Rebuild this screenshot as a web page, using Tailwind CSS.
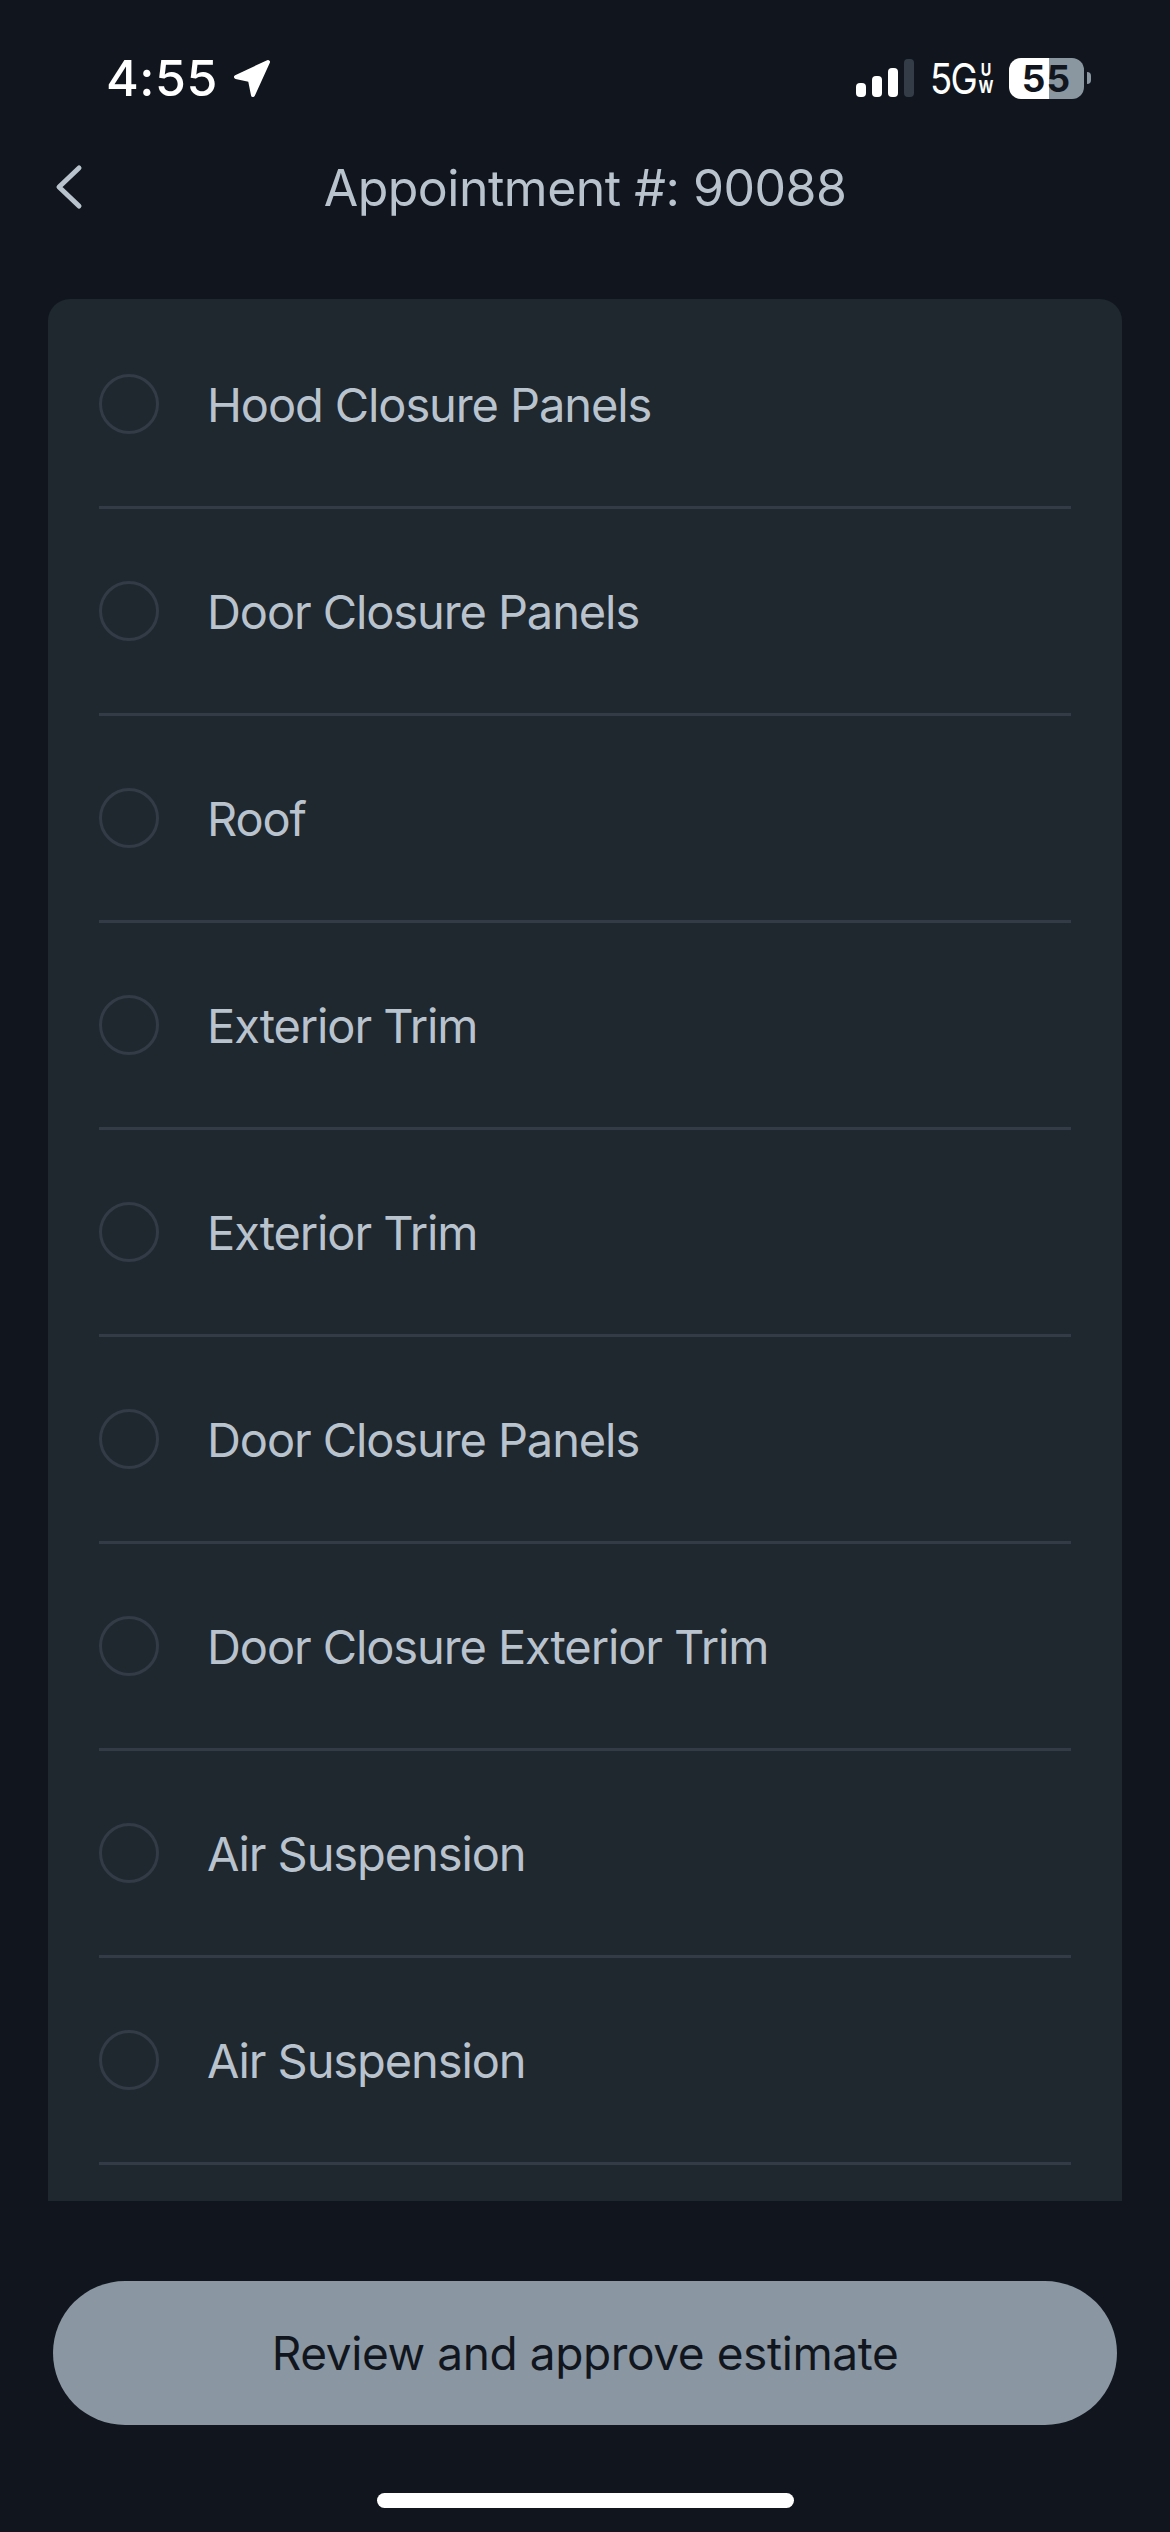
<!doctype html>
<html>
  <head>
    <meta charset="UTF-8">
    <meta name="viewport" content="width=device-width, initial-scale=1.0">
    <script src="https://cdn.jsdelivr.net/npm/@tailwindcss/browser@4"></script>
  </head>
  <body class="bg-[#11161e]">
    <div class="w-[1170px] h-[2532px] flex flex-col bg-[#11161e] font-['Inter',sans-serif] overflow-hidden">

      <!-- status bar -->
      <div class="h-[150px] shrink-0 flex items-start justify-between pt-[55px] pl-[106px] pr-[79px]">
        <div class="flex items-center gap-[14px] h-[46px]">
          <span class="text-[50px] leading-[46px] font-medium text-white tracking-[0.5px]">4:55</span>
          <svg class="w-[40px] h-[40px]" viewBox="0 0 40 40"><path d="M36 4 4 19l14 3 3 15Z" fill="#fff" stroke="#fff" stroke-width="4" stroke-linejoin="round"/></svg>
        </div>
        <div class="flex items-center h-[46px]">
          <svg class="w-[58px] h-[38px]" viewBox="0 0 58 38">
            <rect x="0" y="24" width="10" height="14" rx="4" fill="#fff"/>
            <rect x="16" y="17" width="10" height="21" rx="4" fill="#fff"/>
            <rect x="32" y="9" width="10" height="29" rx="4" fill="#fff"/>
            <rect x="48" y="0" width="10" height="38" rx="4" fill="#343d47"/>
          </svg>
          <span class="ml-[16px] w-[47px] inline-block whitespace-nowrap origin-left scale-x-[0.85] text-[43px] leading-[46px] font-normal text-white tracking-[-2px]">5G</span>
          <div class="ml-[2px] w-[14px] flex flex-col items-center text-[18px] leading-[17px] font-bold text-white scale-x-[0.8]">
            <span>U</span>
            <span>W</span>
          </div>
          <div class="ml-[16px] w-[75px] h-[41px] rounded-[12px] bg-[linear-gradient(90deg,#fff_54%,#8a96a0_54%)] flex items-center justify-center">
            <span class="text-[37px] leading-[41px] font-bold text-[#11161e] tracking-[1px]">55</span>
          </div>
          <div class="ml-[3px] w-[4px] h-[12px] rounded-r-full bg-[#8a96a0]"></div>
        </div>
      </div>

      <!-- header -->
      <div class="relative h-[149px] shrink-0 flex items-start justify-center">
        <svg class="absolute left-[54px] top-[14px] w-[30px] h-[48px]" viewBox="0 0 30 48" fill="none"><path d="M25 4 5 23l20 19" stroke="#b9c3ce" stroke-width="5" stroke-linecap="round" stroke-linejoin="round"/></svg>
        <h1 class="text-[50px] leading-[76px] font-normal text-[#b9c3ce] tracking-[-0.5px]">Appointment #: 90088</h1>
      </div>

      <!-- list -->
      <div class="mx-[48px] h-[1902px] shrink-0 rounded-t-[22px] bg-[#1f272f] px-[51px] pt-[3px] overflow-hidden">
        <div class="h-[207px] flex items-center gap-[48px] border-b-[3px] border-[#333b46]">
          <div class="w-[60px] h-[60px] rounded-full border-[3px] border-[#333b46]"></div>
          <span class="mt-[3px] text-[47px] tracking-[-1.1px] text-[#b9c3ce]">Hood Closure Panels</span>
        </div>
        <div class="h-[207px] flex items-center gap-[48px] border-b-[3px] border-[#333b46]">
          <div class="w-[60px] h-[60px] rounded-full border-[3px] border-[#333b46]"></div>
          <span class="mt-[3px] text-[47px] tracking-[-1.1px] text-[#b9c3ce]">Door Closure Panels</span>
        </div>
        <div class="h-[207px] flex items-center gap-[48px] border-b-[3px] border-[#333b46]">
          <div class="w-[60px] h-[60px] rounded-full border-[3px] border-[#333b46]"></div>
          <span class="mt-[3px] text-[47px] tracking-[-1.1px] text-[#b9c3ce]">Roof</span>
        </div>
        <div class="h-[207px] flex items-center gap-[48px] border-b-[3px] border-[#333b46]">
          <div class="w-[60px] h-[60px] rounded-full border-[3px] border-[#333b46]"></div>
          <span class="mt-[3px] text-[47px] tracking-[-1.1px] text-[#b9c3ce]">Exterior Trim</span>
        </div>
        <div class="h-[207px] flex items-center gap-[48px] border-b-[3px] border-[#333b46]">
          <div class="w-[60px] h-[60px] rounded-full border-[3px] border-[#333b46]"></div>
          <span class="mt-[3px] text-[47px] tracking-[-1.1px] text-[#b9c3ce]">Exterior Trim</span>
        </div>
        <div class="h-[207px] flex items-center gap-[48px] border-b-[3px] border-[#333b46]">
          <div class="w-[60px] h-[60px] rounded-full border-[3px] border-[#333b46]"></div>
          <span class="mt-[3px] text-[47px] tracking-[-1.1px] text-[#b9c3ce]">Door Closure Panels</span>
        </div>
        <div class="h-[207px] flex items-center gap-[48px] border-b-[3px] border-[#333b46]">
          <div class="w-[60px] h-[60px] rounded-full border-[3px] border-[#333b46]"></div>
          <span class="mt-[3px] text-[47px] tracking-[-1.1px] text-[#b9c3ce]">Door Closure Exterior Trim</span>
        </div>
        <div class="h-[207px] flex items-center gap-[48px] border-b-[3px] border-[#333b46]">
          <div class="w-[60px] h-[60px] rounded-full border-[3px] border-[#333b46]"></div>
          <span class="mt-[3px] text-[47px] tracking-[-1.1px] text-[#b9c3ce]">Air Suspension</span>
        </div>
        <div class="h-[207px] flex items-center gap-[48px] border-b-[3px] border-[#333b46]">
          <div class="w-[60px] h-[60px] rounded-full border-[3px] border-[#333b46]"></div>
          <span class="mt-[3px] text-[47px] tracking-[-1.1px] text-[#b9c3ce]">Air Suspension</span>
        </div>
      </div>

      <!-- button -->
      <div class="mt-[80px] mx-[53px] h-[144px] shrink-0 rounded-full bg-[#8a96a2] flex items-center justify-center">
        <span class="text-[46px] tracking-[-0.4px] text-[#11161e]">Review and approve estimate</span>
      </div>

      <!-- home bar -->
      <div class="mt-[68px] mx-auto w-[417px] h-[15px] shrink-0 rounded-full bg-white"></div>
    </div>
  </body>
</html>
